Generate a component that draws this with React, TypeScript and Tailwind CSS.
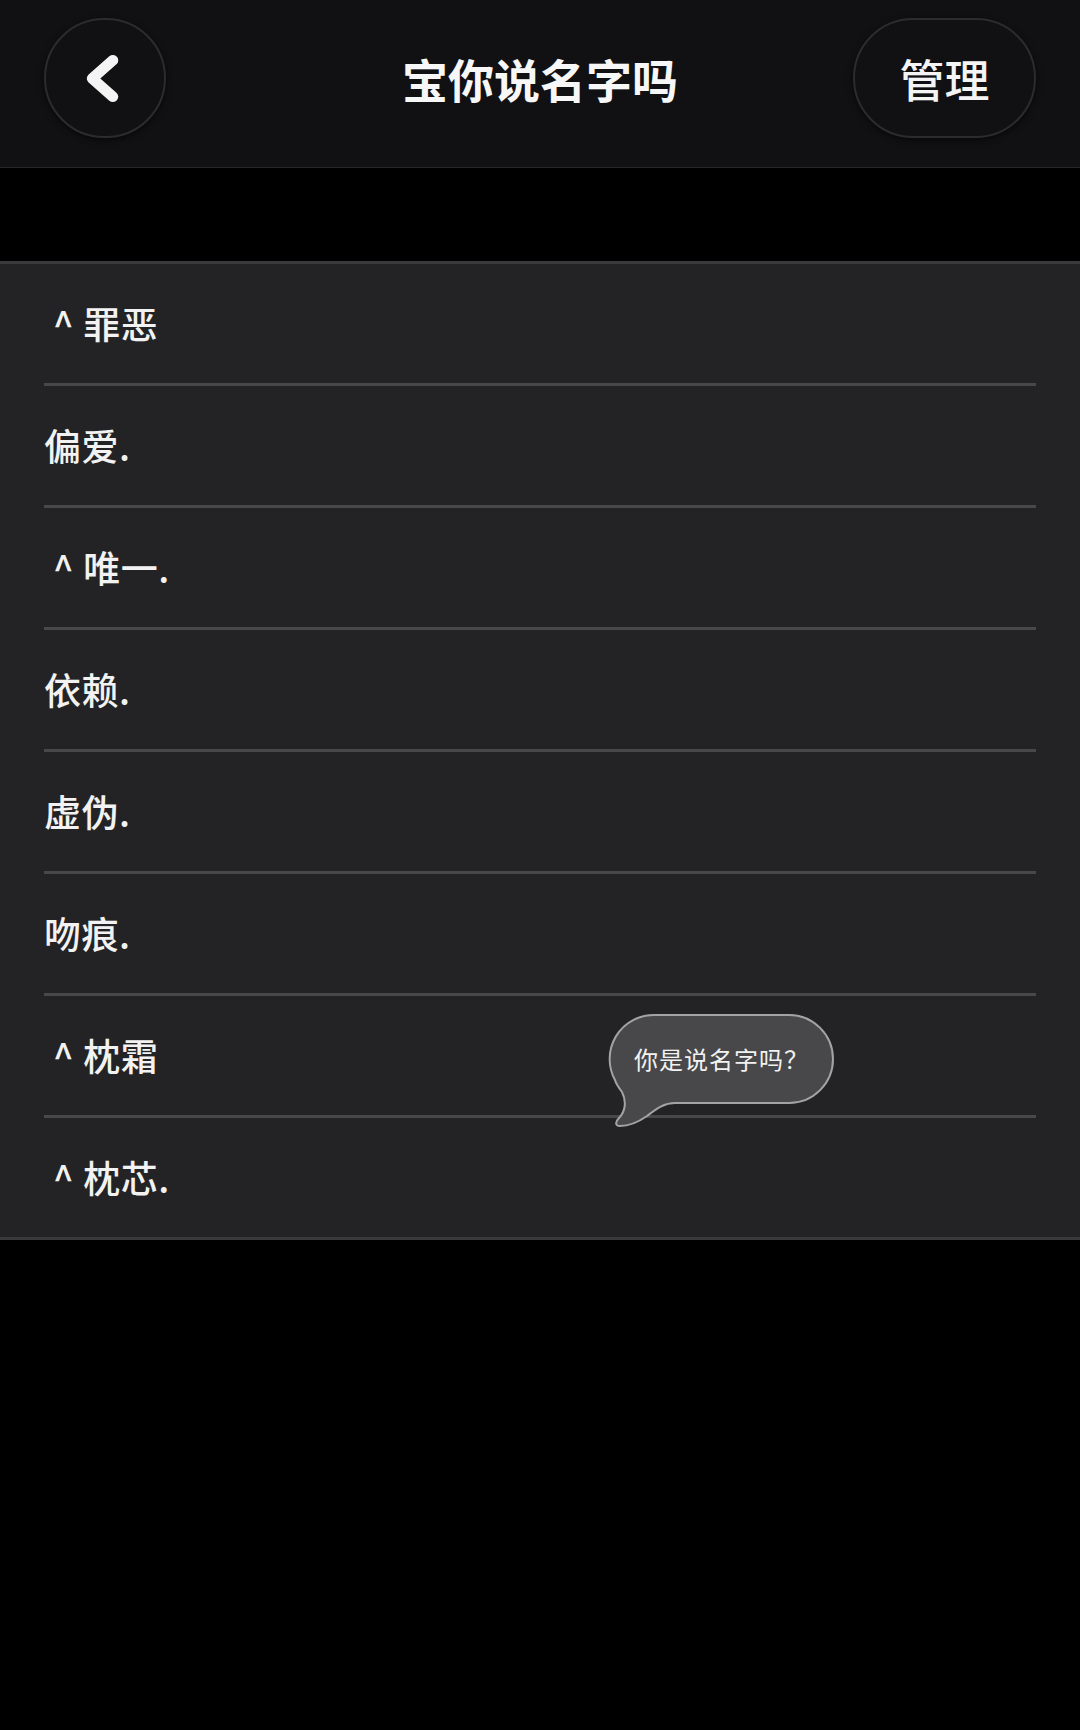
import React from "react";

const names = [
  { text: " ^ 罪恶" },
  { text: "偏爱." },
  { text: " ^ 唯一." },
  { text: "依赖." },
  { text: "虚伪." },
  { text: "吻痕." },
  { text: " ^ 枕霜", bubble: true },
  { text: " ^ 枕芯." }
];

function BackIcon() {
  return (
    <svg width="120" height="120" viewBox="0 0 120 120" fill="none">
      <path
        d="M68 42 L47 60.5 L68 79"
        stroke="#f4f4f4"
        strokeWidth="11"
        strokeLinecap="round"
        strokeLinejoin="round"
      />
    </svg>
  );
}

function Bubble() {
  return (
    <div className="absolute left-[605px] top-[16px] z-10 h-[120px] w-[232px]">
      <svg width="232" height="120" viewBox="0 0 232 120" className="absolute inset-0">
        <path
          d="M49 3 H184 A44 44 0 0 1 184 91 H70 C58 91 50 98 42 104 C32 111 24 114 15 114 C10 114 10 110 14 106 C20 100 22 90 17 80 C14 76 11 72 10 68 A44 44 0 0 1 49 3 Z"
          fill="#48484a"
          stroke="#a3a3a5"
          strokeWidth="2"
        />
      </svg>
      <div className="absolute left-[5px] top-[3px] flex h-[88px] w-[223px] items-center justify-center text-[24px] leading-none tracking-[1px] text-[#f2f2f2]">
        你是说名字吗？
      </div>
    </div>
  );
}

export default function App() {
  return (
    <div
      className="min-h-[1730px] w-[1080px] bg-black"
      style={{ fontFamily: '"Noto Sans CJK SC", "Noto Sans", sans-serif' }}
    >
      <header className="grid h-[168px] grid-cols-[1fr_auto_1fr] items-start border-b border-[#27272a] bg-[#111113] px-[44px] pt-[18px]">
        <div className="flex">
          <button className="flex h-[120px] w-[122px] items-center justify-center rounded-full border-2 border-[#2c2c2e] bg-[#111113] shadow-[0_2px_6px_rgba(0,0,0,0.6)]">
            <BackIcon />
          </button>
        </div>
        <h1 className="flex h-[120px] items-center text-[46px] font-bold leading-none text-[#f7f7f7]">
          宝你说名字吗
        </h1>
        <div className="flex justify-end">
          <button className="flex h-[120px] w-[183px] items-center justify-center rounded-full border-2 border-[#2c2c2e] bg-[#111113] text-[45px] font-medium leading-none text-[#f4f4f4] shadow-[0_2px_6px_rgba(0,0,0,0.6)]">
            管理
          </button>
        </div>
      </header>

      <div className="h-[93px]" />

      <div className="border-y-[3px] border-[#3a3a3c] bg-[#232325]">
        {names.map((item, i) => (
          <div key={item.text}>
            {i > 0 && <div className="mx-[44px] h-[3px] bg-[#48484a]" />}
            <div className="relative flex h-[119px] items-center px-[44px]">
              <span className="whitespace-pre text-[37px] font-medium leading-none tracking-[0.5px] text-[#f2f2f2]">
                {item.text}
              </span>
              {item.bubble && <Bubble />}
            </div>
          </div>
        ))}
      </div>
    </div>
  );
}
